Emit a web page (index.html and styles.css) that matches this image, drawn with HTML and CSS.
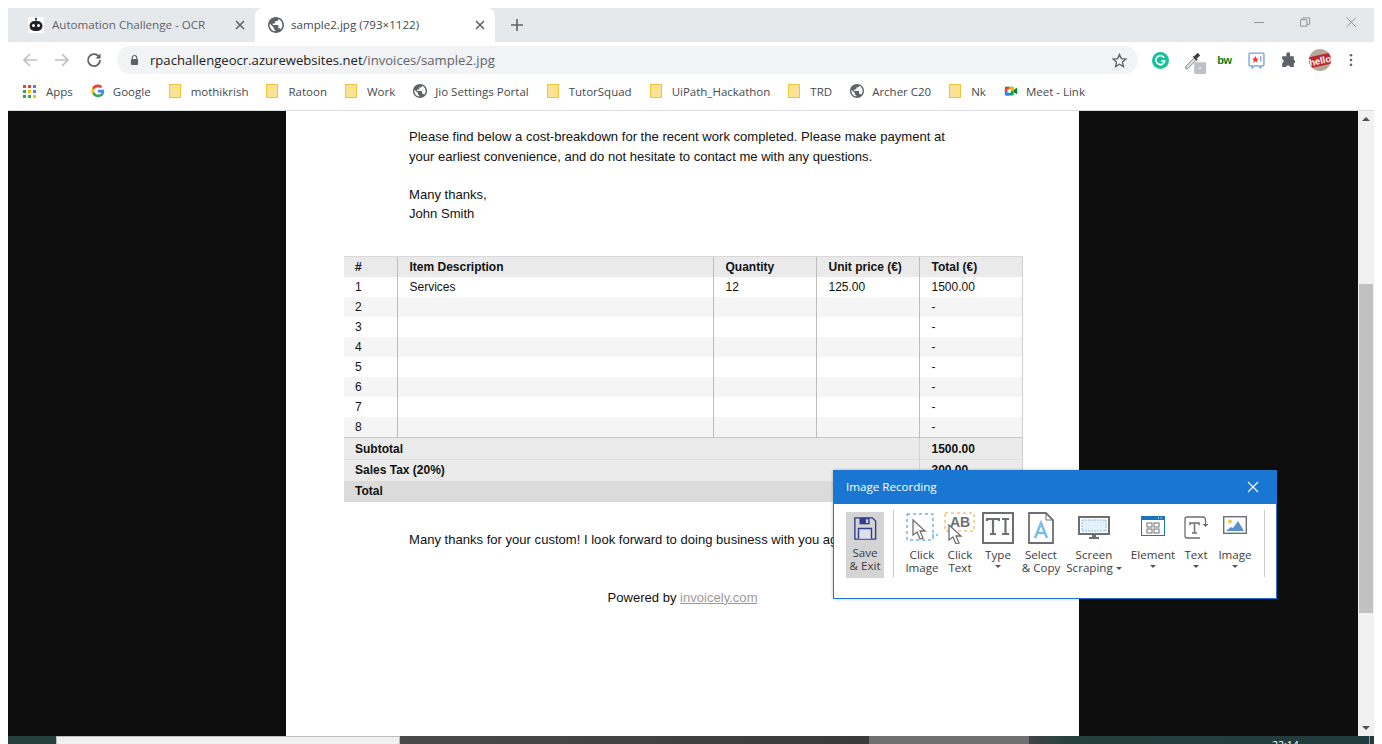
FILE: index.html
```html
<!DOCTYPE html>
<html lang="en">
<head>
    <meta charset="UTF-8">
    <meta name="viewport" content="width=device-width, initial-scale=1.0">
    <title>sample2.jpg (793×1122)</title>
    <link rel="stylesheet" href="styles.css">
</head>
<body>

<div class="window">
    <!-- Tabs -->
    <div class="tabstrip">
        <div class="tab">
            <svg class="favicon" viewBox="0 0 16 16"><rect width="16" height="16" fill="#fff"/><path d="M8 1v3" stroke="#222" stroke-width="1"/><circle cx="8" cy="1.8" r="1" fill="#222"/><rect x="1.5" y="4" width="13" height="10" rx="5" fill="#222"/><circle cx="5.5" cy="8.5" r="1.5" fill="#fff"/><circle cx="10.5" cy="8.5" r="1.5" fill="#fff"/></svg>
            <span class="tab-title">Automation Challenge - OCR</span>
            <svg class="tab-close" viewBox="0 0 10 10"><path d="M1 1l8 8M9 1l-8 8" stroke="#5f6368" stroke-width="1.6"/></svg>
        </div>
        <div class="tab tab-active">
            <svg class="favicon" viewBox="0 0 16 16"><use href="#globe"/></svg>
            <span class="tab-title">sample2.jpg (793×1122)</span>
            <svg class="tab-close" viewBox="0 0 10 10"><path d="M1 1l8 8M9 1l-8 8" stroke="#5f6368" stroke-width="1.6"/></svg>
        </div>
        <svg class="new-tab" viewBox="0 0 12 12"><path d="M6 0v12M0 6h12" stroke="#5f6368" stroke-width="1.6"/></svg>
        <div class="win-controls">
            <svg viewBox="0 0 12 12"><path d="M0 6.500h11" stroke="#8a8d90"/></svg>
            <svg viewBox="0 0 12 12"><path d="M.5 3.500h7v7h-7zM3 3.500V1.500h7.500v7H7.500" fill="none" stroke="#8a8d90"/></svg>
            <svg viewBox="0 0 12 12"><path d="M.5 1l10.500 10.500M11 1L.5 11.500" stroke="#8a8d90"/></svg>
        </div>
    </div>

    <!-- Address bar -->
    <div class="toolbar">
        <svg class="nav-icon" viewBox="0 0 16 16"><path d="M15 8H2M8 2L2 8l6 6" fill="none" stroke="#bdc1c6" stroke-width="1.700"/></svg>
        <svg class="nav-icon" viewBox="0 0 16 16"><path d="M1 8h13M8 2l6 6-6 6" fill="none" stroke="#bdc1c6" stroke-width="1.700"/></svg>
        <svg class="nav-icon" viewBox="0 0 16 16"><path d="M13.400 5.500A6 6 0 1 0 14 8" fill="none" stroke="#5f6368" stroke-width="1.700"/><path d="M14.500 1.500v5h-5z" fill="#5f6368"/></svg>
        <div class="omnibox">
            <svg class="lock" viewBox="0 0 10 12"><path d="M2.500 5V3.500a2.500 2.500 0 0 1 5 0V5" fill="none" stroke="#5f6368" stroke-width="1.200"/><rect x="1" y="5" width="8" height="6.500" rx="1" fill="#5f6368"/></svg>
            <span class="url"><span class="url-host">rpachallengeocr.azurewebsites.net</span>/invoices/sample2.jpg</span>
            <svg class="star" viewBox="0 0 16 16"><path d="M8 1.500l2 4.500 4.800.5-3.600 3.200 1 4.800L8 12l-4.200 2.500 1-4.800L1.200 6.500 6 6z" fill="none" stroke="#5f6368" stroke-width="1.400"/></svg>
        </div>
        <div class="extensions">
            <svg class="ext" viewBox="0 0 16 16"><circle cx="8" cy="8" r="8" fill="#15c39a"/><path d="M11.500 5.500A4.200 4.200 0 1 0 12 8.500H8.500" fill="none" stroke="#fff" stroke-width="1.500"/></svg>
            <svg class="ext ext-dropper" viewBox="0 0 20 20"><path d="M2 17l10-10 2.500 2.500-10 10H2z" fill="#dcdcdc" stroke="#777"/><path d="M12 5l4-4 3 3-4 4z" fill="#3c3c3c"/><path d="M11 5l4.500 4.500" stroke="#3c3c3c" stroke-width="2"/><rect x="12" y="12" width="14" height="14" rx="1.500" fill="#bdc1c6"/><path d="M17.500 19h3" stroke="#fff" stroke-width="1.200"/></svg>
            <span class="ext ext-bw">bw</span>
            <svg class="ext" viewBox="0 0 16 16"><path d="M2 1h12a1 1 0 0 1 1 1v10a1 1 0 0 1-1 1h-2v2l-2-2H6l-2 2v-2H2a1 1 0 0 1-1-1V2a1 1 0 0 1 1-1z" fill="#fff" stroke="#6f9fdc" stroke-width="1.200"/><path d="M7 3.500l1 2.500h2.300L8.500 7.500l.7 2.500L7 8.600 4.800 10l.7-2.500L3.700 6H6z" fill="#e8383d"/><path d="M12 4v5" stroke="#6f9fdc" stroke-width="1.200"/></svg>
            <svg class="ext" viewBox="0 0 16 16"><path d="M6 1.500a1.800 1.800 0 0 1 3.500 0V4H13v3.200a1.900 1.900 0 0 1 0 3.600V14H9.500a2 2 0 0 0-3.800 0H2v-3.500a2 2 0 0 0 0-3.800V4h4z" fill="#5f6368"/></svg>
            <span class="avatar"><span class="avatar-label">hello</span></span>
            <svg class="ext-menu" viewBox="0 0 4 16"><circle cx="2" cy="2.500" r="1.500" fill="#5f6368"/><circle cx="2" cy="8" r="1.500" fill="#5f6368"/><circle cx="2" cy="13.500" r="1.500" fill="#5f6368"/></svg>
        </div>
    </div>

    <!-- Bookmarks -->
    <div class="bookmarks">
        <a class="bm bm-apps"><span class="apps-grid"><i class="r"></i><i class="r"></i><i class="b"></i><i class="g"></i><i class="y"></i><i class="b"></i><i class="g"></i><i class="g"></i><i class="y"></i></span>Apps</a>
        <a class="bm"><svg class="bm-icon" viewBox="0 0 16 16"><path d="M15 8.200c0-.5 0-1-.1-1.500H8v2.900h4a3.400 3.400 0 0 1-1.500 2.200v1.900h2.400c1.400-1.300 2.100-3.200 2.100-5.500z" fill="#4285f4"/><path d="M8 15c2 0 3.700-.7 4.900-1.800l-2.400-1.900c-.7.500-1.500.7-2.500.7-1.900 0-3.500-1.300-4.100-3H1.400v1.900A7 7 0 0 0 8 15z" fill="#34a853"/><path d="M3.900 9a4.200 4.200 0 0 1 0-2.700V4.400H1.400a7 7 0 0 0 0 6.500z" fill="#fbbc05"/><path d="M8 3.800c1.100 0 2 .4 2.800 1.100l2.100-2.100A7 7 0 0 0 1.400 4.400l2.500 1.900c.6-1.700 2.200-2.500 4.100-2.500z" fill="#ea4335"/></svg>Google</a>
        <a class="bm"><span class="folder"></span>mothikrish</a>
        <a class="bm"><span class="folder"></span>Ratoon</a>
        <a class="bm"><span class="folder"></span>Work</a>
        <a class="bm"><svg class="bm-icon" viewBox="0 0 16 16"><use href="#globe"/></svg>Jio Settings Portal</a>
        <a class="bm"><span class="folder"></span>TutorSquad</a>
        <a class="bm"><span class="folder"></span>UiPath_Hackathon</a>
        <a class="bm"><span class="folder"></span>TRD</a>
        <a class="bm"><svg class="bm-icon" viewBox="0 0 16 16"><use href="#globe"/></svg>Archer C20</a>
        <a class="bm"><span class="folder"></span>Nk</a>
        <a class="bm"><svg class="bm-icon" viewBox="0 0 16 16"><rect x="1" y="3" width="10" height="10" rx="1.500" fill="#00ac47"/><path d="M1 4.500A1.500 1.500 0 0 1 2.500 3H6v5H1z" fill="#ea4335"/><path d="M6 3h3.500A1.500 1.500 0 0 1 11 4.500V8H6z" fill="#ffba00"/><path d="M1 8h5v5H2.500A1.500 1.500 0 0 1 1 11.500z" fill="#2684fc"/><rect x="4" y="6" width="4" height="4" fill="#fff"/><path d="M11 7l4-3v8l-4-3z" fill="#00832d"/></svg>Meet - Link</a>
    </div>

    <!-- Image viewer -->
    <div class="viewport">
        <div class="invoice">
            <div class="note">
                <p>Please find below a cost-breakdown for the recent work completed. Please make payment at<br>your earliest convenience, and do not hesitate to contact me with any questions.</p>
                <p class="signoff">Many thanks,<br>John Smith</p>
            </div>
            <table class="items">
                <thead>
                    <tr><th>#</th><th>Item Description</th><th>Quantity</th><th>Unit price (€)</th><th>Total (€)</th></tr>
                </thead>
                <tbody>
                    <tr><td>1</td><td>Services</td><td>12</td><td>125.00</td><td>1500.00</td></tr>
                    <tr><td>2</td><td></td><td></td><td></td><td>-</td></tr>
                    <tr><td>3</td><td></td><td></td><td></td><td>-</td></tr>
                    <tr><td>4</td><td></td><td></td><td></td><td>-</td></tr>
                    <tr><td>5</td><td></td><td></td><td></td><td>-</td></tr>
                    <tr><td>6</td><td></td><td></td><td></td><td>-</td></tr>
                    <tr><td>7</td><td></td><td></td><td></td><td>-</td></tr>
                    <tr><td>8</td><td></td><td></td><td></td><td>-</td></tr>
                </tbody>
                <tfoot>
                    <tr class="subtotal"><td colspan="4">Subtotal</td><td>1500.00</td></tr>
                    <tr class="tax"><td colspan="4">Sales Tax (20%)</td><td>300.00</td></tr>
                    <tr class="grand"><td colspan="4">Total</td><td>1800.00</td></tr>
                </tfoot>
            </table>
            <p class="closing">Many thanks for your custom! I look forward to doing business with you again in due course.</p>
            <p class="powered">Powered by <span class="powered-link">invoicely.com</span></p>
        </div>
        <div class="scrollbar">
            <span class="arrow-up"></span>
            <span class="thumb"></span>
            <span class="arrow-down"></span>
        </div>

        <!-- Recorder panel -->
        <div class="recorder">
            <div class="recorder-title">
                <span>Image Recording</span>
                <svg class="recorder-close" viewBox="0 0 12 12"><path d="M1 1l10 10M11 1L1 11" stroke="#fff" stroke-width="1.100"/></svg>
            </div>
            <div class="recorder-tools">
                <div class="tool tool-save">
                    <svg class="tool-icon" viewBox="0 0 26 26"><path d="M2 1.500h19l3.500 3.500v19.500H2z" fill="none" stroke="#2f3f8f" stroke-width="1.500"/><path d="M7 1.500h11v7H7z" fill="#2f3f8f"/><path d="M14 3h2.500v4H14z" fill="#d4d4d4"/><path d="M6 24V13h14v11" fill="#dfe1ea" stroke="#2f3f8f" stroke-width="1.500"/></svg>
                    <span>Save<br>&amp; Exit</span>
                </div>
                <span class="tool-sep"></span>
                <div class="tool tool-click-image">
                    <svg class="tool-icon" viewBox="0 0 32 32"><rect x="1" y="2" width="26" height="26" fill="none" stroke="#2e8bd0" stroke-dasharray="3 3"/><path d="M7 8l0 15 4-3 3 7 3-1-3-7h5z" fill="#fff" stroke="#6d6e71" stroke-width="1.300"/><path d="M26 23h6" stroke="#2e8bd0" stroke-dasharray="2 2"/></svg>
                    <span>Click<br>Image</span>
                </div>
                <div class="tool tool-click-text">
                    <svg class="tool-icon" viewBox="0 0 32 32"><rect x="1" y="1" width="29" height="18" fill="none" stroke="#e8a33d" stroke-dasharray="3 3"/><text x="6" y="15" class="ab-text">AB</text><path d="M5 13l0 15 4-3 3 7 3-1-3-7h5z" fill="#fff" stroke="#6d6e71" stroke-width="1.300"/></svg>
                    <span>Click<br>Text</span>
                </div>
                <div class="tool tool-type">
                    <svg class="tool-icon" viewBox="0 0 32 32"><rect x="1" y="1" width="30" height="30" fill="none" stroke="#6d6e71" stroke-width="2"/><path d="M5 9V7h12v2M11 7v15M8 22h6M20 7h7M23.500 7v15M20 22h7" fill="none" stroke="#6d6e71" stroke-width="2.200"/></svg>
                    <span>Type</span>
                    <i class="caret"></i>
                </div>
                <div class="tool tool-select">
                    <svg class="tool-icon" viewBox="0 0 26 32"><path d="M1 1h17l7 7v23H1z" fill="#fff" stroke="#6d6e71" stroke-width="1.800"/><path d="M18 1v7h7" fill="none" stroke="#6d6e71"/><path d="M7 26l6-15 6 15M9 21h8" fill="none" stroke="#7cbce8" stroke-width="2.500"/></svg>
                    <span>Select<br>&amp; Copy</span>
                </div>
                <div class="tool tool-screen">
                    <svg class="tool-icon" viewBox="0 0 32 24"><rect x="1" y="1" width="30" height="17" fill="#fff" stroke="#6d6e71" stroke-width="2"/><rect x="4" y="4" width="24" height="11" fill="#e4f1fb" stroke="#7cbce8" stroke-dasharray="2 1"/><path d="M15 18h2v3h-2zM11 22h10" stroke="#6d6e71" stroke-width="2"/></svg>
                    <span>Screen<br>Scraping<i class="caret caret-inline"></i></span>
                </div>
                <div class="tool tool-element">
                    <svg class="tool-icon" viewBox="0 0 24 20"><rect x=".5" y=".5" width="23" height="19" fill="#fff" stroke="#1b75bb"/><rect width="24" height="4" fill="#1b75bb"/><path d="M17 2h1M19.500 2h1" stroke="#fff"/><rect x="6" y="7" width="5" height="4" fill="none" stroke="#6d6e71"/><rect x="13" y="7" width="5" height="4" fill="none" stroke="#6d6e71"/><rect x="6" y="13" width="5" height="4" fill="none" stroke="#6d6e71"/><rect x="13" y="13" width="5" height="4" fill="none" stroke="#6d6e71"/></svg>
                    <span>Element</span>
                    <i class="caret"></i>
                </div>
                <div class="tool tool-text">
                    <svg class="tool-icon" viewBox="0 0 24 23"><path d="M19 1H3a2 2 0 0 0-2 2v17a2 2 0 0 0 2 2h13" fill="none" stroke="#6d6e71" stroke-width="1.300"/><path d="M19 1a2.500 2.500 0 0 1 2.500 2.500V9" fill="none" stroke="#6d6e71" stroke-width="1.300"/><path d="M18.500 8h6l-3 3z" fill="#6d6e71"/><path d="M6 9V7h9v2M10.500 7v10M8 17h5" fill="none" stroke="#6d6e71" stroke-width="1.500"/></svg>
                    <span>Text</span>
                    <i class="caret"></i>
                </div>
                <div class="tool tool-image">
                    <svg class="tool-icon" viewBox="0 0 24 18"><rect x=".7" y=".7" width="22.600" height="16.600" fill="#fff" stroke="#6d6e71" stroke-width="1.400"/><circle cx="7" cy="5.500" r="2" fill="#f5c94c"/><path d="M3 15l5-4 2 1 5-7 6 10z" fill="#5b8fd0"/></svg>
                    <span>Image</span>
                    <i class="caret"></i>
                </div>
                <span class="tool-sep tool-sep-end"></span>
            </div>
        </div>
    </div>

    <!-- Desktop behind the window -->
    <div class="desktop">
        <span class="desk-a"></span>
        <span class="desk-b"></span>
        <span class="desk-c"></span>
        <span class="desk-d"></span>
        <span class="desk-e"><span class="clock">22:14</span></span>
    </div>
</div>

<svg class="defs" width="0" height="0">
    <symbol id="globe" viewBox="2 2 20 20">
        <circle cx="12" cy="12" r="9" fill="#fff"/>
        <path fill="#5f6368" d="M12 2C6.480 2 2 6.480 2 12s4.480 10 10 10 10-4.480 10-10S17.520 2 12 2zm-1 17.930c-3.950-.490-7-3.850-7-7.930 0-.620.080-1.210.210-1.790L9 15v1c0 1.100.900 2 2 2v1.930zm6.900-2.540c-.260-.810-1-1.390-1.900-1.390h-1v-3c0-.550-.450-1-1-1H8v-2h2c.550 0 1-.450 1-1V7h2c1.100 0 2-.900 2-2v-.410c2.930 1.190 5 4.060 5 7.410 0 2.080-.800 3.970-2.100 5.390z"/>
    </symbol>
</svg>

</body>
</html>
```

FILE: styles.css
```css
* {
    margin: 0;
    padding: 0;
    box-sizing: border-box;
}

html, body {
    height: 100%;
    background: #fff;
    overflow: hidden;
}

body {
    padding: 8px 8px 0;
    font-family: "Open Sans", "Noto Sans", sans-serif;
}

.defs {
    position: absolute;
}

.window {
    height: 736px;
    display: flex;
    flex-direction: column;
}

/* Tabs */
.tabstrip {
    height: 34px;
    background: #e6e9ec;
    display: flex;
    align-items: stretch;
    padding-left: 7px;
    flex-shrink: 0;
}

.tab {
    width: 240px;
    display: flex;
    align-items: center;
    padding: 0 7px 0 13px;
    font-size: 11.600px;
    color: #5f6368;
}

.tab-active {
    background: #fff;
    color: #45494d;
    border-radius: 8px 8px 0 0;
}

.favicon {
    width: 16px;
    height: 16px;
    flex-shrink: 0;
    margin-right: 8px;
}

.tab-active .favicon {
    margin-right: 7px;
}

.tab-title {
    flex: 1;
    white-space: nowrap;
    overflow: hidden;
    margin-bottom: 2px;
}

.tab-close {
    width: 10px;
    height: 10px;
    margin-right: 3px;
}

.new-tab {
    width: 12px;
    height: 12px;
    margin: 11px 0 0 16px;
}

.win-controls {
    margin-left: auto;
    display: flex;
    gap: 35px;
    padding: 8px 17px 0 0;
}

.win-controls svg {
    width: 11px;
    height: 12px;
}

/* Address bar */
.toolbar {
    height: 32px;
    background: #fff;
    display: flex;
    align-items: center;
    padding: 4px 0 0 14px;
    flex-shrink: 0;
}

.nav-icon {
    width: 16px;
    height: 16px;
    margin-right: 16px;
}

.omnibox {
    width: 1021px;
    height: 28px;
    margin-left: -1px;
    background: #f1f3f4;
    border-radius: 14px;
    display: flex;
    align-items: center;
    padding: 0 11px 0 13px;
    font-size: 13.100px;
    color: #5f6368;
}

.lock {
    width: 9px;
    height: 12px;
    margin-right: 11px;
}

.url {
    flex: 1;
    white-space: nowrap;
}

.url-host {
    color: #202124;
}

.star {
    width: 15px;
    height: 15px;
}

.extensions {
    display: flex;
    align-items: center;
    gap: 15px;
    margin-left: 14px;
}

.ext {
    width: 17px;
    height: 17px;
    flex-shrink: 0;
}

.ext-dropper {
    overflow: visible;
}

.ext-bw {
    font-family: "Liberation Sans", sans-serif;
    font-size: 11px;
    font-weight: 700;
    letter-spacing: -.5px;
    color: #0a7d12;
    line-height: 17px;
    text-align: center;
}

.avatar {
    width: 22px;
    height: 22px;
    margin: 0 0 0 -3px;
    border-radius: 50%;
    background: #b5a99a;
    overflow: hidden;
    display: flex;
    align-items: center;
    justify-content: center;
}

.avatar-label {
    display: block;
    flex-shrink: 0;
    width: 30px;
    background: #c0272d;
    color: #fff;
    font-family: "Liberation Sans", sans-serif;
    font-size: 9.500px;
    font-weight: 700;
    line-height: 11px;
    text-align: center;
    transform: rotate(-12deg);
}

.ext-menu {
    width: 4px;
    height: 14px;
    margin-left: 3px;
}

/* Bookmarks */
.bookmarks {
    height: 37px;
    background: #fff;
    border-bottom: 1px solid #dadce0;
    display: flex;
    align-items: center;
    padding: 0 0 2px 15px;
    font-size: 11.500px;
    color: #45494d;
    flex-shrink: 0;
}

.bm {
    display: flex;
    align-items: center;
    white-space: nowrap;
    margin-right: 18px;
}

.bm-icon {
    width: 14px;
    height: 14px;
    margin-right: 8px;
}

.folder {
    width: 12px;
    height: 14px;
    margin-right: 10px;
    background: #fde293;
    border: 1px solid #f0c53c;
}

.apps-grid {
    width: 13px;
    height: 13px;
    margin-right: 10px;
    display: grid;
    grid-template-columns: repeat(3, 3px);
    gap: 2px;
}

.apps-grid i {
    display: block;
    height: 3px;
}

.r { background: #ea4335; }
.g { background: #34a853; }
.b { background: #4285f4; }
.y { background: #fbbc05; }

/* Image viewer */
.viewport {
    position: relative;
    flex: 1;
    min-height: 0;
    background: #0e0e0e;
    overflow: hidden;
    padding-right: 16px;
}

.invoice {
    width: 793px;
    height: 100%;
    margin-left: 278px;
    background: #fff;
    padding: 16px 58px 0;
    font-family: "Liberation Sans", Arial, sans-serif;
    font-size: 13.070px;
    color: #111;
}

.note {
    padding-left: 65px;
    line-height: 20px;
}

.signoff {
    margin-top: 18px;
    line-height: 19px;
}

.items {
    width: 679px;
    margin-top: 33px;
    border-collapse: collapse;
    table-layout: fixed;
    font-size: 12px;
}

.items th:nth-child(1) { width: 53px; }
.items th:nth-child(2) { width: 316px; }
.items th:nth-child(3) { width: 103px; }
.items th:nth-child(4) { width: 103px; }

.items th, .items td {
    height: 20px;
    padding: 0 11px;
    text-align: left;
    white-space: nowrap;
}

.items th + th,
.items td + td {
    padding-left: 12px;
}

.items thead th {
    background: #eaeaea;
    border-top: 1px solid #d8d8d8;
    font-weight: 700;
}

.items th + th,
.items tbody td + td {
    border-left: 1px solid #bdbdbd;
}

.items th:last-child,
.items td:last-child {
    border-right: 1px solid #cfcfcf;
}

.items tbody tr:nth-child(even) {
    background: #f5f5f5;
}

.items tbody tr:last-child td {
    height: 21px;
}

.items tfoot td {
    height: 21px;
    font-weight: 700;
    background: #ebebeb;
}

.items tfoot td + td {
    border-left: 1px solid #d4d4d4;
}

.items tfoot .subtotal td {
    height: 22px;
    border-top: 1px solid #c8c8c8;
}

.items tfoot .tax td {
    border-top: 1px solid #e0e0e0;
}

.items tfoot .grand td {
    background: #dbdbdb;
}

.closing {
    margin-top: 30px;
    padding-left: 65px;
    line-height: 16px;
    white-space: nowrap;
}

.powered {
    margin-top: 42px;
    text-align: center;
    line-height: 16px;
}

.powered-link {
    color: #9a9a9a;
    text-decoration: underline;
}

/* Scrollbar */
.scrollbar {
    position: absolute;
    top: 0;
    right: 0;
    width: 16px;
    height: 100%;
    background: #f1f1f1;
}

.thumb {
    position: absolute;
    top: 173px;
    left: 1px;
    width: 14px;
    height: 329px;
    background: #c1c1c1;
}

.arrow-up, .arrow-down {
    position: absolute;
    left: 4px;
    width: 0;
    height: 0;
    border-left: 4px solid transparent;
    border-right: 4px solid transparent;
}

.arrow-up {
    top: 6px;
    border-bottom: 4px solid #505050;
}

.arrow-down {
    bottom: 6px;
    border-top: 4px solid #505050;
}

/* Recorder panel */
.recorder {
    position: absolute;
    left: 825px;
    top: 359px;
    width: 444px;
    height: 129px;
    background: #fff;
    border: 1px solid #1976d2;
    box-shadow: 0 0 3px rgba(0, 0, 0, .25);
    font-family: "Open Sans", sans-serif;
    font-size: 11.600px;
    color: #3d3d3d;
}

.recorder-title {
    height: 33px;
    background: #1976d2;
    color: #fff;
    display: flex;
    align-items: center;
    justify-content: space-between;
    padding: 0 17px 2px 12px;
}

.recorder-close {
    width: 12px;
    height: 12px;
}

.recorder-tools {
    display: flex;
    align-items: flex-start;
    padding: 8px 0 0 12px;
}

.tool {
    display: flex;
    flex-direction: column;
    align-items: center;
    text-align: center;
    line-height: 13px;
    white-space: nowrap;
}

.tool-icon {
    display: block;
    height: 32px;
    margin-bottom: 4px;
}

.tool-save {
    width: 38px;
    height: 66px;
    background: #d4d4d4;
    padding-top: 4px;
}

.tool-save .tool-icon {
    width: 24px;
    height: 25px;
    margin-bottom: 5px;
}

.tool-sep {
    width: 1px;
    height: 67px;
    background: #cccccc;
    margin: -2px 10px 0 9px;
}

.tool-sep-end {
    margin: -2px 0 0 10px;
}

.tool-click-image { width: 36px; }
.tool-click-text { width: 36px; margin-left: 2px; }
.tool-type { width: 34px; margin-left: 3px; }
.tool-select { width: 42px; margin-left: 5px; }
.tool-screen { width: 58px; margin-left: 3px; }
.tool-element { width: 44px; margin-left: 8px; }
.tool-text { width: 32px; margin-left: 5px; }
.tool-image { width: 38px; margin-left: 4px; }

.tool-click-image .tool-icon,
.tool-click-text .tool-icon,
.tool-type .tool-icon,
.tool-screen .tool-icon {
    width: 32px;
}

.tool-select .tool-icon { width: 26px; }
.tool-element .tool-icon { width: 24px; height: 20px; margin: 4px 0 12px; }
.tool-text .tool-icon { width: 24px; height: 23px; margin: 4px 0 9px; }
.tool-image .tool-icon { width: 24px; height: 18px; margin: 4px 0 14px; }

.ab-text {
    font-family: "Liberation Sans", sans-serif;
    font-size: 14px;
    font-weight: 700;
    fill: #6d6e71;
}

.caret {
    display: block;
    width: 0;
    height: 0;
    margin-top: 4px;
    border-left: 3px solid transparent;
    border-right: 3px solid transparent;
    border-top: 3px solid #555;
}

.caret-inline {
    display: inline-block;
    margin: 0 0 2px 3px;
}

/* Desktop behind the window */
.desktop {
    height: 8px;
    display: flex;
    flex-shrink: 0;
    overflow: hidden;
}

.desk-a { width: 48px; background: #26403f; }
.desk-b { width: 344px; background: #f0f0f0; border: 1px solid #bbb; border-bottom: 0; }
.desk-c { width: 469px; background: linear-gradient(90deg, #4a4a4a, #3a3a3a); }
.desk-d { width: 160px; background: #707070; }
.desk-e { flex: 1; background: linear-gradient(90deg, #3f4543, #26403f 12%, #1f3b3c); position: relative; }

.desk-e::after {
    content: "";
    position: absolute;
    top: 0;
    bottom: 0;
    right: 4px;
    width: 1px;
    background: #8a9a9a;
}

.clock {
    position: absolute;
    left: 243px;
    top: 3px;
    font-size: 10.500px;
    line-height: 12px;
    color: #fff;
}
```
